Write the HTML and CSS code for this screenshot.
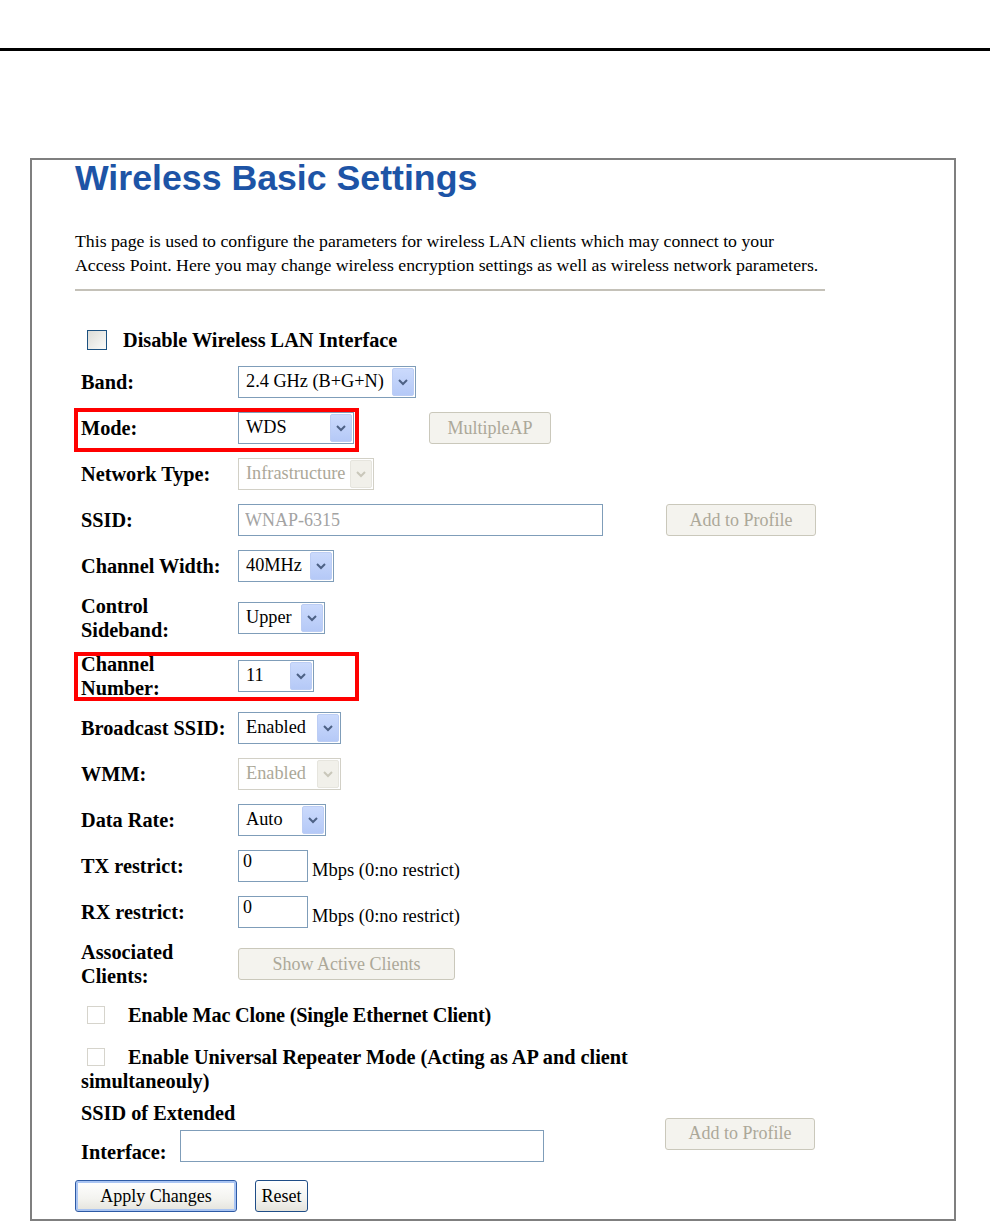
FILE: index.html
```html
<!DOCTYPE html>
<html>
<head>
<meta charset="utf-8">
<title>Wireless Basic Settings</title>
<link rel="stylesheet" href="styles.css">
</head>
<body>
<div class="topline"></div>
<main class="frame">
  <h1 class="title">Wireless Basic Settings</h1>
  <p class="desc">This page is used to configure the parameters for wireless LAN clients which may connect to your<br>Access Point. Here you may change wireless encryption settings as well as wireless network parameters.</p>
  <hr class="rule">

  <div class="check-row first"><span class="cb"></span><span class="lbl">Disable Wireless LAN Interface</span></div>

  <div class="fields">
    <div class="row">
      <div class="label">Band:</div>
      <div class="ctl"><div class="sel w-band"><span class="val">2.4 GHz (B+G+N)</span><span class="arr"><svg width="10" height="7" viewBox="0 0 10 7"><polyline points="1,1 5,5 9,1" fill="none" stroke="#4d6185" stroke-width="2"/></svg></span></div></div>
    </div>
    <div class="row">
      <div class="label">Mode:</div>
      <div class="ctl">
        <div class="sel w-mode"><span class="val">WDS</span><span class="arr"><svg width="10" height="7" viewBox="0 0 10 7"><polyline points="1,1 5,5 9,1" fill="none" stroke="#4d6185" stroke-width="2"/></svg></span></div>
        <button class="btn dis b-multi">MultipleAP</button>
      </div>
      <div class="mark"></div>
    </div>
    <div class="row">
      <div class="label">Network Type:</div>
      <div class="ctl"><div class="sel dis w-net"><span class="val">Infrastructure</span><span class="arr"><svg width="10" height="7" viewBox="0 0 10 7"><polyline points="1,1 5,5 9,1" fill="none" stroke="#c9c7ba" stroke-width="2"/></svg></span></div></div>
    </div>
    <div class="row">
      <div class="label">SSID:</div>
      <div class="ctl">
        <input class="txt w-ssid grey" type="text" value="WNAP-6315">
        <button class="btn dis b-add">Add to Profile</button>
      </div>
    </div>
    <div class="row">
      <div class="label">Channel Width:</div>
      <div class="ctl"><div class="sel w-cw"><span class="val">40MHz</span><span class="arr"><svg width="10" height="7" viewBox="0 0 10 7"><polyline points="1,1 5,5 9,1" fill="none" stroke="#4d6185" stroke-width="2"/></svg></span></div></div>
    </div>
    <div class="row two">
      <div class="label">Control<br>Sideband:</div>
      <div class="ctl"><div class="sel w-cs"><span class="val">Upper</span><span class="arr"><svg width="10" height="7" viewBox="0 0 10 7"><polyline points="1,1 5,5 9,1" fill="none" stroke="#4d6185" stroke-width="2"/></svg></span></div></div>
    </div>
    <div class="row two">
      <div class="label">Channel<br>Number:</div>
      <div class="ctl"><div class="sel w-cn"><span class="val">11</span><span class="arr"><svg width="10" height="7" viewBox="0 0 10 7"><polyline points="1,1 5,5 9,1" fill="none" stroke="#4d6185" stroke-width="2"/></svg></span></div></div>
      <div class="mark mark-two"></div>
    </div>
    <div class="row">
      <div class="label">Broadcast SSID:</div>
      <div class="ctl"><div class="sel w-bs"><span class="val">Enabled</span><span class="arr"><svg width="10" height="7" viewBox="0 0 10 7"><polyline points="1,1 5,5 9,1" fill="none" stroke="#4d6185" stroke-width="2"/></svg></span></div></div>
    </div>
    <div class="row">
      <div class="label">WMM:</div>
      <div class="ctl"><div class="sel dis w-bs"><span class="val">Enabled</span><span class="arr"><svg width="10" height="7" viewBox="0 0 10 7"><polyline points="1,1 5,5 9,1" fill="none" stroke="#c9c7ba" stroke-width="2"/></svg></span></div></div>
    </div>
    <div class="row">
      <div class="label">Data Rate:</div>
      <div class="ctl"><div class="sel w-dr"><span class="val">Auto</span><span class="arr"><svg width="10" height="7" viewBox="0 0 10 7"><polyline points="1,1 5,5 9,1" fill="none" stroke="#4d6185" stroke-width="2"/></svg></span></div></div>
    </div>
    <div class="row">
      <div class="label">TX restrict:</div>
      <div class="ctl low"><input class="txt w-num top" type="text" value="0"><span class="unit">Mbps (0:no restrict)</span></div>
    </div>
    <div class="row">
      <div class="label">RX restrict:</div>
      <div class="ctl low"><input class="txt w-num top" type="text" value="0"><span class="unit">Mbps (0:no restrict)</span></div>
    </div>
    <div class="row two">
      <div class="label">Associated<br>Clients:</div>
      <div class="ctl"><button class="btn dis b-show">Show Active Clients</button></div>
    </div>
  </div>

  <div class="check-row mac"><span class="cb dis"></span><span class="lbl">Enable Mac Clone (Single Ethernet Client)</span></div>
  <p class="repeater"><span class="cb dis"></span><span class="rp-text">Enable Universal Repeater Mode (Acting as AP and client simultaneouly)</span></p>

  <div class="ext">
    <div class="ext-left">
      <div>SSID of Extended</div>
      <div class="iface-line"><span class="iface">Interface:</span><input class="txt w-ext" type="text"></div>
    </div>
    <button class="btn dis b-add2">Add to Profile</button>
  </div>

  <div class="actions">
    <button class="btn main b-apply">Apply Changes</button>
    <button class="btn plain b-reset">Reset</button>
  </div>
</main>
</body>
</html>
```

FILE: styles.css
```css
html, body {
  margin: 0;
  padding: 0;
  background: #fff;
}
body {
  font-family: "Liberation Serif", "Times New Roman", serif;
  color: #000;
}
.topline {
  height: 3px;
  background: #000;
  margin-top: 48px;
}
.frame {
  box-sizing: border-box;
  height: 1063px;
  margin: 107px 34px 0 30px;
  border: 2px solid #7f7f7f;
  padding: 0 0 0 43px;
  overflow: hidden;
}
.title {
  margin: 0;
  font-family: "Liberation Sans", Arial, sans-serif;
  font-weight: bold;
  font-size: 35.7px;
  line-height: 36px;
  color: #1d54a6;
}
.desc {
  margin: 33px 0 0;
  font-size: 17.75px;
  line-height: 24px;
  white-space: nowrap;
}
.rule {
  margin: 12px 0 0;
  width: 750px;
  height: 2px;
  border: 0;
  background: #c4c1b8;
}
.check-row {
  display: flex;
  align-items: center;
  font-weight: bold;
  font-size: 20.3px;
  line-height: 24px;
  height: 24px;
  white-space: nowrap;
}
.check-row.first {
  margin: 37px 0 7px 12px;
}
.check-row.first .lbl { margin-left: 16px; }
.cb {
  display: inline-block;
  box-sizing: border-box;
  width: 20px;
  height: 20px;
  border: 1px solid #1c5180;
  background: linear-gradient(135deg, #dcdcd7, #fbfbf9);
  flex: none;
}
.cb.dis {
  width: 18px;
  height: 18px;
  border-color: #d6d4cc;
  background: #fff;
}
.fields { display: flex; flex-direction: column; }
.row {
  position: relative;
  display: grid;
  grid-template-columns: 163px auto;
  align-items: center;
  height: 46px;
}
.row.two { height: 58px; }
.label {
  padding-left: 6px;
  font-weight: bold;
  font-size: 20.3px;
  line-height: 24px;
  white-space: nowrap;
}
.ctl {
  display: flex;
  align-items: center;
}
.ctl.low { align-items: flex-end; }
.mark {
  position: absolute;
  left: -1px;
  top: 3px;
  width: 285px;
  height: 44px;
  box-sizing: border-box;
  border: 4px solid #ff0000;
  pointer-events: none;
}
.mark.mark-two {
  top: 5px;
  height: 49px;
}
.sel {
  box-sizing: border-box;
  height: 32px;
  border: 1px solid #7f9db9;
  background: #fff;
  display: flex;
  align-items: center;
  justify-content: space-between;
  padding: 1px;
  font-size: 18.3px;
}
.sel .val {
  padding-left: 6px;
  white-space: nowrap;
  line-height: 20px;
  margin-top: -3px;
}
.sel .arr {
  box-sizing: border-box;
  width: 22px;
  height: 28px;
  border: 1px solid #bccdf4;
  border-radius: 2px;
  background: linear-gradient(180deg, #cbdafc 0%, #b5c9f7 100%);
  display: flex;
  align-items: center;
  justify-content: center;
  flex: none;
}
.sel.dis {
  border-color: #d2d0c6;
}
.sel.dis .val { color: #aca899; }
.sel.dis .arr {
  border-color: #e6e5de;
  background: #f1f0ea;
}
.w-band { width: 178px; }
.w-mode { width: 116px; }
.w-net { width: 136px; }
.w-cw { width: 96px; }
.w-cs { width: 87px; }
.w-cn { width: 76px; }
.w-bs { width: 103px; }
.w-dr { width: 88px; }
.txt {
  box-sizing: border-box;
  height: 32px;
  border: 1px solid #7f9db9;
  background: #fff;
  font-family: "Liberation Serif", "Times New Roman", serif;
  font-size: 18px;
  padding: 0 6px;
  color: #000;
  margin: 0;
  outline: none;
}
.txt.grey { color: #a3a3a3; }
.txt.top { padding: 0 4px 9px; }
.w-ssid { width: 365px; }
.w-num { width: 70px; }
.w-ext { width: 364px; }
.unit {
  font-size: 18.5px;
  line-height: 20px;
  margin: 0 0 2px 4px;
}
.btn {
  box-sizing: border-box;
  height: 32px;
  font-family: "Liberation Serif", "Times New Roman", serif;
  font-size: 18px;
  padding: 0;
  margin: 0;
  border-radius: 3px;
  cursor: default;
  white-space: nowrap;
}
.btn.dis {
  border: 1px solid #cac8bb;
  background: #f4f3ee;
  color: #aca899;
}
.b-multi { width: 122px; margin-left: 75px; }
.b-add { width: 150px; margin-left: 63px; }
.b-show { width: 217px; }
.check-row.mac {
  margin: 10px 0 0 12px;
}
.check-row.mac .lbl { margin-left: 23px; letter-spacing: -0.2px; }
.repeater {
  margin: 18px 0 0 6px;
  width: 560px;
  font-weight: bold;
  font-size: 20.3px;
  line-height: 24px;
}
.repeater .cb {
  vertical-align: -2px;
  margin-left: 6px;
  margin-right: 23px;
}
.ext {
  display: flex;
  align-items: center;
  margin-top: 8px;
}
.ext-left {
  width: 584px;
  padding-left: 6px;
  font-weight: bold;
  font-size: 20.3px;
  line-height: 24px;
}
.iface-line {
  display: flex;
  align-items: flex-end;
  margin-top: 5px;
}
.iface {
  margin-right: 13px;
  margin-bottom: -2px;
}
.b-add2 { width: 150px; margin-top: 4px; }
.actions {
  display: flex;
  gap: 18px;
  margin-top: 18px;
}
.btn.main {
  width: 162px;
  border: 1px solid #2d5aa5;
  background: linear-gradient(180deg, #ffffff 0%, #f3f3ef 60%, #e4e3dc 100%);
  box-shadow: inset 0 0 0 2px #a9c4f2;
  color: #000;
}
.btn.plain {
  width: 53px;
  border: 1px solid #1f4d87;
  background: linear-gradient(180deg, #ffffff 0%, #f3f3ef 60%, #e4e3dc 100%);
  color: #000;
}
```
